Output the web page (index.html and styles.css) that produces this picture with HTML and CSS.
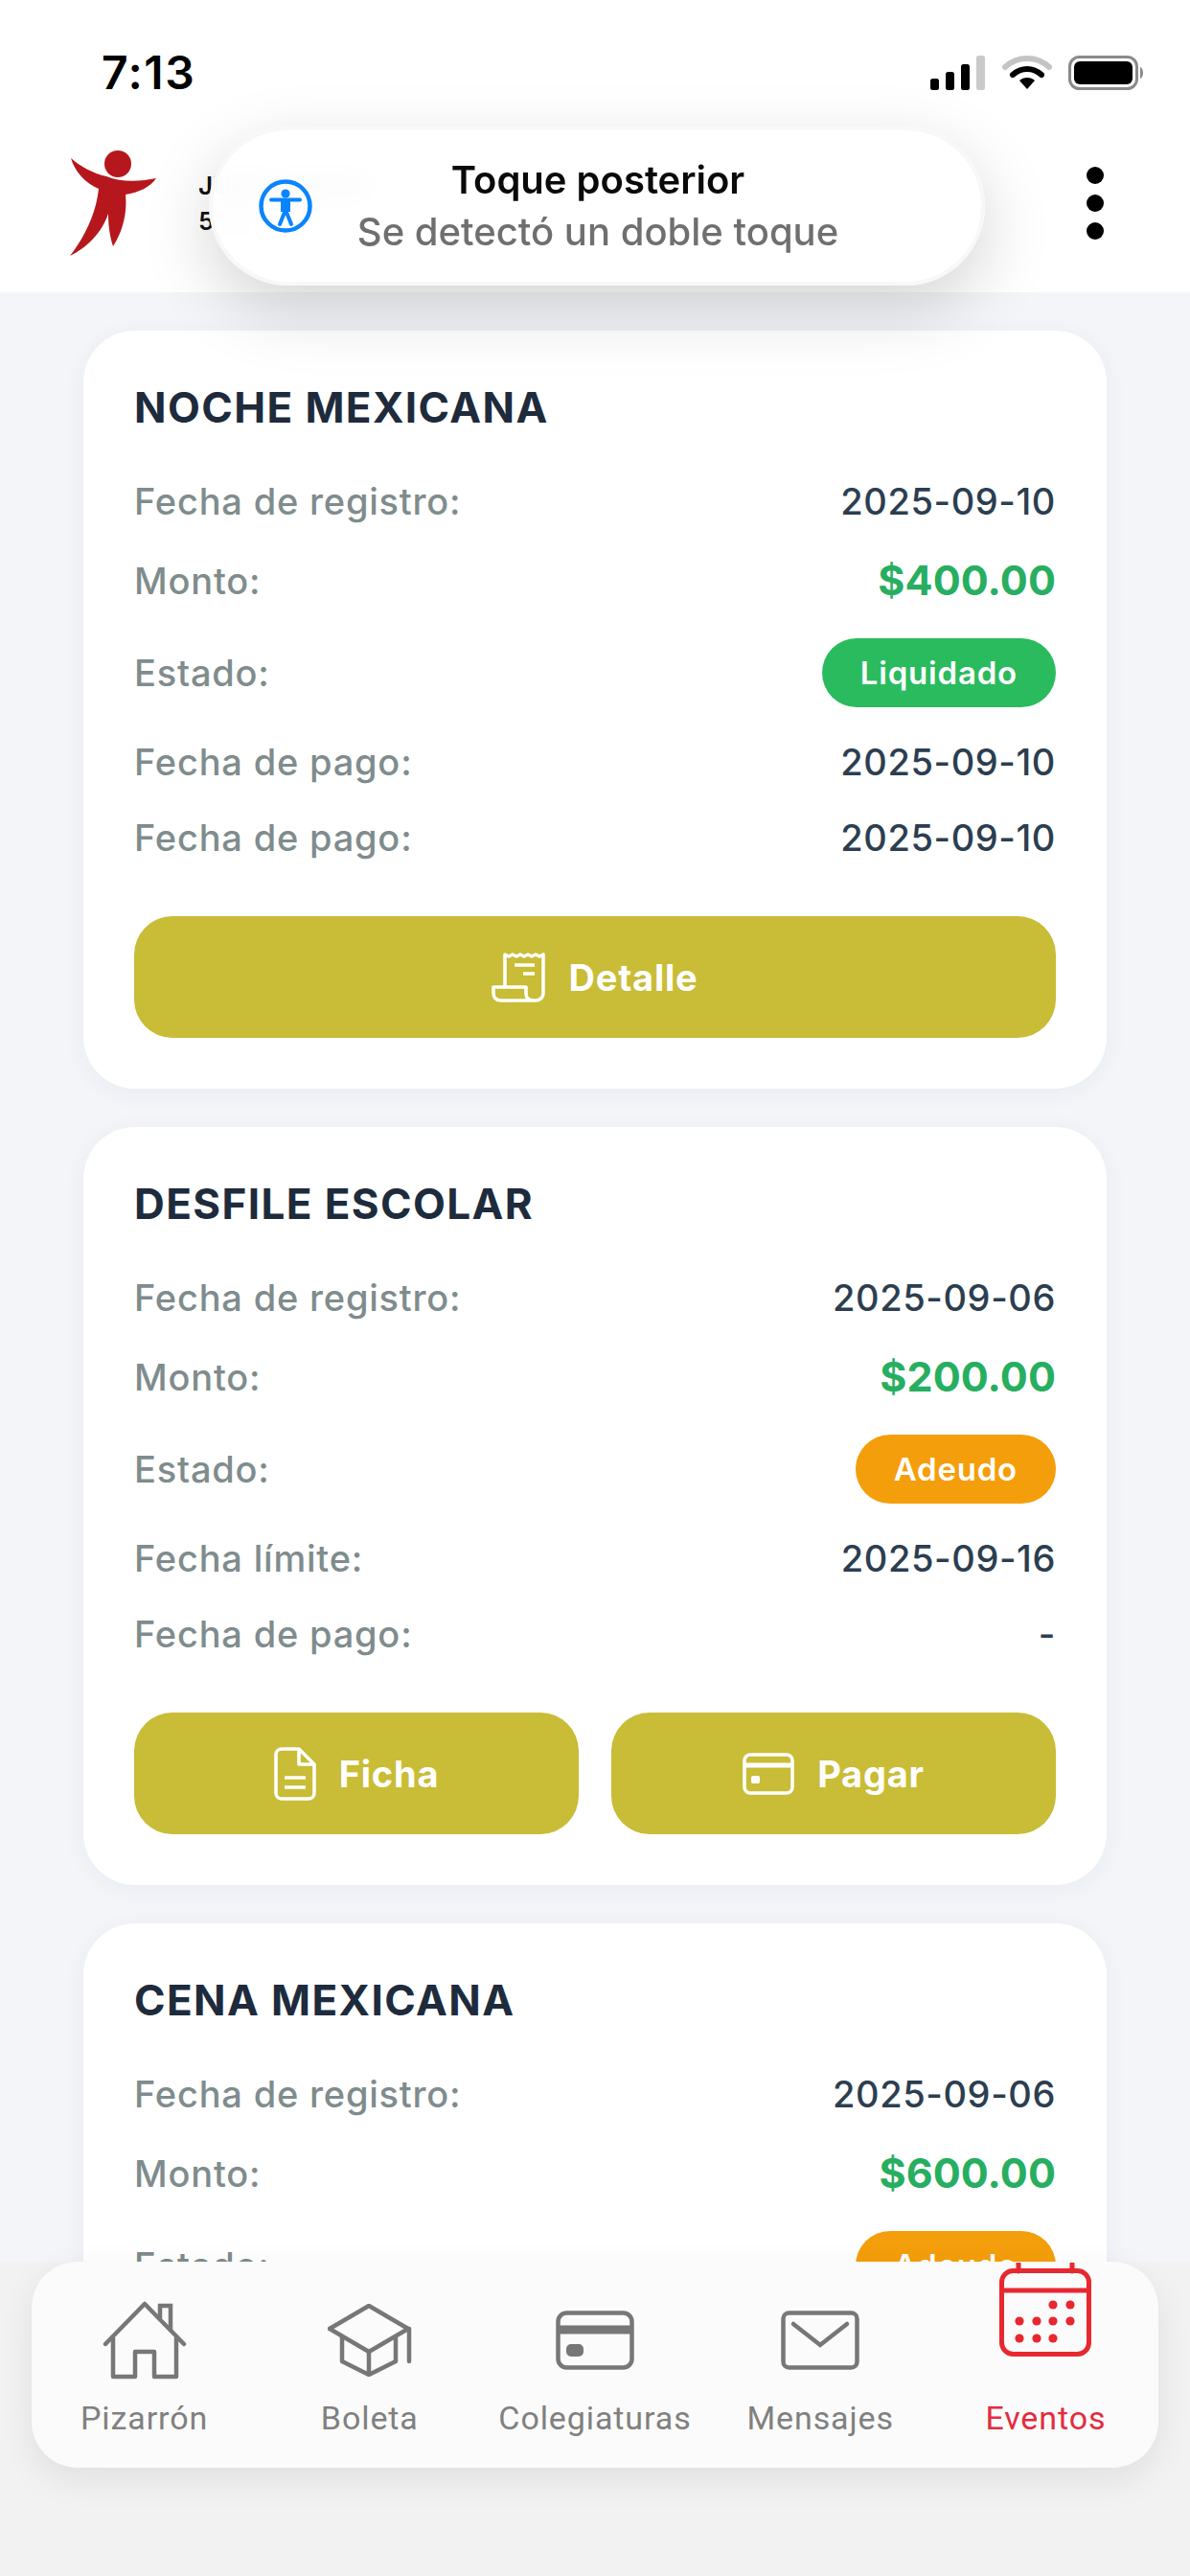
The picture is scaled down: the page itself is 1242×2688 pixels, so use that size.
FILE: index.html
```html
<!DOCTYPE html>
<html lang="es">
<head>
<meta charset="utf-8">
<title>Eventos</title>
<link rel="stylesheet" href="styles.css">
</head>
<body>
<div class="screen">
  <header class="top">
    <div class="status">
      <span class="time">7:13</span>
      <div class="status-icons">
        <svg class="signal" viewBox="0 0 58 36"><rect x="0" y="24" width="9" height="12" rx="2.5" fill="#000"/><rect x="16" y="17" width="9" height="19" rx="2.5" fill="#000"/><rect x="32" y="9" width="9" height="27" rx="2.5" fill="#000"/><rect x="48" y="0" width="9" height="36" rx="2.5" fill="#c9c9c9"/></svg>
        <svg class="wifi" viewBox="0 0 52 36"><path d="M3 12 C16 0 36 0 49 12" fill="none" stroke="#c4c4c4" stroke-width="6" stroke-linecap="round"/><path d="M11 20 C20 12 32 12 41 20" fill="none" stroke="#000" stroke-width="6" stroke-linecap="round"/><path d="M18 26 C22 22 30 22 34 26 L26 35 Z" fill="#000"/></svg>
        <svg class="battery" viewBox="0 0 80 36"><rect x="1.5" y="1.5" width="70" height="33" rx="10" fill="none" stroke="#8a8a8a" stroke-width="3"/><rect x="6" y="6" width="61" height="24" rx="6" fill="#000"/><path d="M75 12 C79 13 79 23 75 24 Z" fill="#8a8a8a"/></svg>
      </div>
    </div>
    <div class="brand">
      <svg class="logo" viewBox="0 0 90 110"><circle cx="50" cy="14" r="14" fill="#b5171c"/><path d="M1 8 C10 16 24 24 38 27 C55 34 75 32 90 29 C84 38 72 44 58 46 C60 65 55 85 45 100 C41 88 40 76 40 66 C34 84 20 100 0 110 C14 92 27 68 30 40 C16 34 5 22 1 8 Z" fill="#b5171c"/></svg>
      <div class="user">
        <div>JUAN GARCIA</div>
        <div>5° A</div>
      </div>
      <div class="menu"><i></i><i></i><i></i></div>
    </div>
  </header>

  <aside class="toast">
    <svg class="toast-icon" viewBox="0 0 56 56"><circle cx="28" cy="28" r="25.5" fill="none" stroke="#0a84ff" stroke-width="4.5"/><circle cx="28" cy="15" r="4.6" fill="#0a84ff"/><path d="M13 21.5 H43 M28 22 V33 M28 32 L22 47 M28 32 L34 47" fill="none" stroke="#0a84ff" stroke-width="4" stroke-linecap="round"/><path d="M23 22 H33 V34 H23 Z" fill="#0a84ff"/></svg>
    <div class="toast-text">
      <div class="toast-title">Toque posterior</div>
      <div class="toast-sub">Se detectó un doble toque</div>
    </div>
  </aside>

  <main class="list">
    <section class="card">
      <h2 class="card-title">NOCHE MEXICANA</h2>
      <div class="row"><span class="label">Fecha de registro:</span><span class="value">2025-09-10</span></div>
      <div class="row"><span class="label">Monto:</span><span class="amount">$400.00</span></div>
      <div class="row"><span class="label">Estado:</span><span class="badge badge-paid">Liquidado</span></div>
      <div class="row"><span class="label">Fecha de pago:</span><span class="value">2025-09-10</span></div>
      <div class="row"><span class="label">Fecha de pago:</span><span class="value">2025-09-10</span></div>
      <div class="actions">
        <button class="btn">
          <svg class="btn-icon-receipt" viewBox="0 0 56 52"><path d="M14 36 V2 L18 4 L22 2 L26 4 L30 2 L34 4 L38 2 L42 4 L46 2 L50 4 L54 2 V42 C54 47 50 50 46 50 H10 C5 50 2 47 2 42 V36 H36 V43 C36 47 39 50 44 50" fill="none" stroke="#fff" stroke-width="3.6" stroke-linejoin="round"/><path d="M24 13 H45 M33 22 H45" stroke="#fff" stroke-width="3.6"/></svg>
          <span>Detalle</span>
        </button>
      </div>
    </section>

    <section class="card">
      <h2 class="card-title">DESFILE ESCOLAR</h2>
      <div class="row"><span class="label">Fecha de registro:</span><span class="value">2025-09-06</span></div>
      <div class="row"><span class="label">Monto:</span><span class="amount">$200.00</span></div>
      <div class="row"><span class="label">Estado:</span><span class="badge badge-due">Adeudo</span></div>
      <div class="row"><span class="label">Fecha límite:</span><span class="value">2025-09-16</span></div>
      <div class="row"><span class="label">Fecha de pago:</span><span class="value">-</span></div>
      <div class="actions">
        <button class="btn">
          <svg class="btn-icon-doc" viewBox="0 0 44 56"><path d="M8 2 H26 L42 18 V48 C42 52 39 54 36 54 H8 C5 54 2 52 2 48 V8 C2 4 5 2 8 2 Z M26 2 V18 H42" fill="none" stroke="#fff" stroke-width="3.6" stroke-linejoin="round"/><path d="M11 32 H33 M11 42 H33" stroke="#fff" stroke-width="3.6"/></svg>
          <span>Ficha</span>
        </button>
        <button class="btn">
          <svg class="btn-icon-card" viewBox="0 0 54 44"><rect x="2" y="2" width="50" height="40" rx="6" fill="none" stroke="#fff" stroke-width="3.6"/><path d="M2 13 H52" stroke="#fff" stroke-width="5"/><rect x="9" y="24" width="9" height="8" rx="2" fill="#fff"/></svg>
          <span>Pagar</span>
        </button>
      </div>
    </section>

    <section class="card">
      <h2 class="card-title">CENA MEXICANA</h2>
      <div class="row"><span class="label">Fecha de registro:</span><span class="value">2025-09-06</span></div>
      <div class="row"><span class="label">Monto:</span><span class="amount">$600.00</span></div>
      <div class="row"><span class="label">Estado:</span><span class="badge badge-due">Adeudo</span></div>
    </section>
  </main>

  <footer class="dock">
    <nav class="tabs">
      <a class="tab">
        <span class="tab-icon"><svg class="ico-home" viewBox="0 0 88 82"><path d="M3 45 L44 3 L85 45" fill="none" stroke="#777" stroke-width="4.5" stroke-linecap="round" stroke-linejoin="round"/><path d="M60 18 V5 H71 V30" fill="none" stroke="#777" stroke-width="4.5"/><path d="M11 38 V79 H34 V53 H54 V79 H77 V38" fill="none" stroke="#777" stroke-width="4.5" stroke-linejoin="round"/></svg></span>
        <span class="tab-label">Pizarrón</span>
      </a>
      <a class="tab">
        <span class="tab-icon"><svg class="ico-cap" viewBox="0 0 88 76"><path d="M2 26 L43 2 L84 26 L43 50 Z" fill="none" stroke="#777" stroke-width="4.5" stroke-linejoin="round"/><path d="M15 35 V60 L43 74 L71 60 V35 M43 50 V74" fill="none" stroke="#777" stroke-width="4.5" stroke-linejoin="round"/><path d="M85 26 V60" stroke="#777" stroke-width="4.5" stroke-linecap="round"/></svg></span>
        <span class="tab-label">Boleta</span>
      </a>
      <a class="tab">
        <span class="tab-icon"><svg class="ico-card" viewBox="0 0 82 62"><rect x="2.5" y="2.5" width="77" height="57" rx="9" fill="none" stroke="#777" stroke-width="4.5"/><path d="M2 20 H80" stroke="#777" stroke-width="9"/><rect x="11" y="35" width="18" height="13" rx="5" fill="#777"/></svg></span>
        <span class="tab-label">Colegiaturas</span>
      </a>
      <a class="tab">
        <span class="tab-icon"><svg class="ico-mail" viewBox="0 0 82 62"><rect x="2.5" y="2.5" width="77" height="57" rx="6" fill="none" stroke="#777" stroke-width="4.5"/><path d="M13 14 L41 36 L69 14" fill="none" stroke="#777" stroke-width="4.5" stroke-linecap="round"/></svg></span>
        <span class="tab-label">Mensajes</span>
      </a>
      <a class="tab tab-active">
        <span class="tab-icon"><svg class="ico-cal" viewBox="0 0 96 98"><rect x="2.5" y="8.5" width="91" height="87" rx="12" fill="none" stroke="#e8282f" stroke-width="5"/><path d="M2 29 H94" stroke="#e8282f" stroke-width="5"/><path d="M20 1 V9 M76 1 V9" stroke="#e8282f" stroke-width="5" stroke-linecap="round"/><g fill="#e8282f"><circle cx="56" cy="44" r="4.6"/><circle cx="74" cy="44" r="4.6"/><circle cx="21" cy="61" r="4.6"/><circle cx="39" cy="61" r="4.6"/><circle cx="56" cy="61" r="4.6"/><circle cx="74" cy="61" r="4.6"/><circle cx="21" cy="79" r="4.6"/><circle cx="39" cy="79" r="4.6"/><circle cx="56" cy="79" r="4.6"/></g></svg></span>
        <span class="tab-label">Eventos</span>
      </a>
    </nav>
  </footer>
</div>
</body>
</html>
```
FILE: styles.css
```css
* { box-sizing: border-box; }
html, body { margin: 0; padding: 0; }
body { width: 1242px; height: 2688px; overflow: hidden; font-family: Inter, "Liberation Sans", sans-serif; background: #f3f5f9; }
.screen { position: relative; width: 1242px; height: 2688px; overflow: hidden; display: flex; flex-direction: column; }

.top { height: 305px; flex: none; background: #fff; }
.status { display: flex; justify-content: space-between; align-items: center; height: 36px; margin-top: 58px; padding: 0 47px 0 106px; }
.time { font-size: 48px; font-weight: 600; color: #000; line-height: 36px; letter-spacing: 1.5px; }
.status-icons { display: flex; align-items: center; gap: 17px; }
.signal { width: 58px; height: 36px; }
.wifi { width: 52px; height: 36px; }
.battery { width: 80px; height: 36px; }

.brand { display: flex; align-items: center; margin-top: 63px; padding-left: 73px; padding-right: 90px; height: 110px; }
.logo { width: 90px; height: 110px; flex: none; }
.user { margin-left: 44px; flex: 1; font-size: 26px; font-weight: 600; color: #111; line-height: 37px; }
.menu { display: flex; flex-direction: column; gap: 11px; }
.menu i { display: block; width: 18px; height: 18px; border-radius: 50%; background: #000; }

.toast { position: absolute; left: 218px; top: 132px; width: 810px; height: 166px; border-radius: 83px; background: rgba(255,255,255,.95); border: 4px solid #f8f8f8; box-shadow: 0 24px 70px rgba(0,0,0,.17); backdrop-filter: blur(14px); display: flex; align-items: center; padding-left: 48px; z-index: 3; }
.toast-icon { width: 56px; height: 56px; flex: none; }
.toast-text { width: 520px; margin-left: 38px; text-align: center; }
.toast-title { font-size: 40px; line-height: 54px; font-weight: 600; color: #0a0a0a; }
.toast-sub { font-size: 40px; line-height: 54px; font-weight: 500; color: #6f6f6f; }

.list { flex: 1; overflow: hidden; padding: 40px 87px 0; display: flex; flex-direction: column; gap: 40px; }
.card { flex: none; background: #fff; border-radius: 54px; padding: 53px; box-shadow: 0 4px 24px rgba(40,50,80,.05); display: flex; flex-direction: column; gap: 35px; }
.card-title { margin: 0 0 14px; font-size: 44px; line-height: 54px; font-weight: 700; color: #1e2b3c; letter-spacing: 1.4px; }
.row { display: flex; justify-content: space-between; align-items: center; }
.label { font-size: 38px; line-height: 44px; font-weight: 500; color: #7f8c8d; letter-spacing: .8px; }
.value { font-size: 38px; line-height: 44px; font-weight: 500; color: #2c3e50; letter-spacing: .6px; }
.amount { font-size: 43px; line-height: 51px; font-weight: 700; color: #27ae60; letter-spacing: .1px; }
.badge { height: 72px; line-height: 72px; padding: 0 40px; border-radius: 36px; font-size: 33px; font-weight: 600; color: #fff; letter-spacing: .8px; }
.badge-paid { background: #2abb5e; }
.badge-due { background: #f59e0b; }

.actions { display: flex; gap: 34px; margin-top: 25px; }
.btn { flex: 1; height: 127px; border: 0; border-radius: 40px; background: #c9bc36; color: #fff; font-family: inherit; font-size: 38px; font-weight: 700; letter-spacing: .8px; display: flex; align-items: center; justify-content: center; gap: 24px; }
.btn-icon-receipt { width: 56px; height: 52px; }
.btn-icon-doc { width: 44px; height: 56px; }
.btn-icon-card { width: 54px; height: 44px; }

.dock { position: absolute; left: 0; right: 0; bottom: 0; height: 328px; background: #f2f2f2; padding: 0 33px; z-index: 2; }
.tabs { height: 215px; background: #fbfbfb; border-radius: 48px; box-shadow: 0 12px 36px rgba(0,0,0,.08); display: grid; grid-template-columns: repeat(5, 1fr); padding-top: 34px; }
.tab { display: flex; flex-direction: column; align-items: center; gap: 14px; color: #808080; }
.tab-icon { height: 96px; display: flex; align-items: center; justify-content: center; }
.tab-active .tab-icon { transform: translateY(-32px); }
.tab-active { color: #e32c3f; }
.tab-label { font-family: Roboto, "Liberation Sans", sans-serif; font-size: 34px; line-height: 38px; letter-spacing: .9px; }
.ico-home { width: 88px; height: 82px; }
.ico-cap { width: 88px; height: 76px; }
.ico-card, .ico-mail { width: 82px; height: 62px; }
.ico-cal { width: 96px; height: 98px; }
```
